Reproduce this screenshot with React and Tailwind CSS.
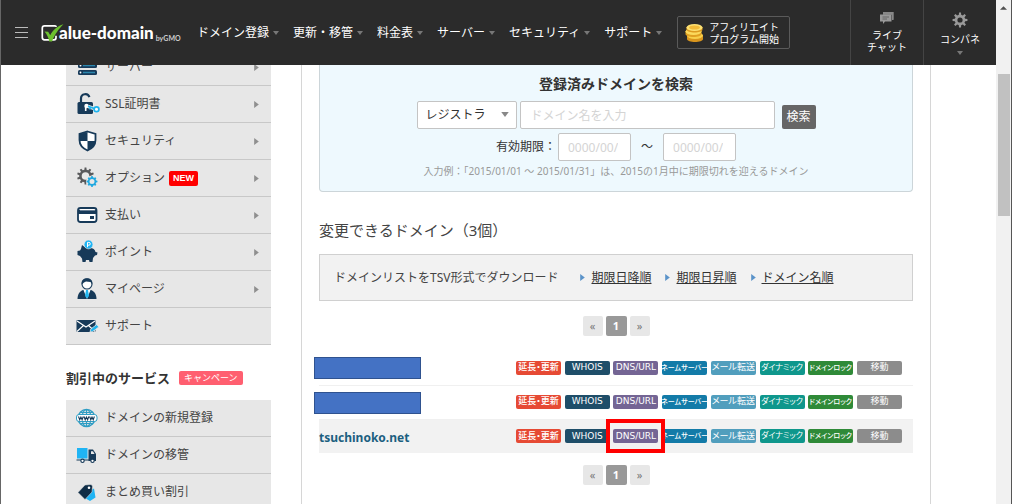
import React from "react";

const navItems = ["ドメイン登録", "更新・移管", "料金表", "サーバー", "セキュリティ", "サポート"];

function Down({ className }) {
  return (
    <svg viewBox="0 0 6 4" className={className} aria-hidden="true">
      <path d="M0 0h6L3 4z" fill="currentColor" />
    </svg>
  );
}

function Right({ className }) {
  return (
    <svg viewBox="0 0 4 6" className={className} aria-hidden="true">
      <path d="M0 0v6l4-3z" fill="currentColor" />
    </svg>
  );
}

function Svg({ children }) {
  return (
    <svg viewBox="0 0 24 24" className="h-6 w-6 shrink-0" fill="none" aria-hidden="true">
      {children}
    </svg>
  );
}

function gearPath(cx, cy, teeth, outer, inner) {
  const points = [];
  for (let i = 0; i < teeth; i++) {
    const base = (i * 2 * Math.PI) / teeth;
    const step = (2 * Math.PI) / teeth;
    [[-0.28, inner], [-0.17, outer], [0.17, outer], [0.28, inner]].forEach(([o, r]) => {
      const a = base + o * step;
      points.push(`${(cx + r * Math.sin(a)).toFixed(2)} ${(cy - r * Math.cos(a)).toFixed(2)}`);
    });
  }
  return `M${points.join("L")}Z`;
}

const ServerIcon = () => (
  <Svg>
    {[1, 8, 15].map((y) => (
      <g key={y}>
        <rect x="2" y={y} width="19" height="5" rx="1.5" fill="#173a59" />
        <path d={`M7 ${y + 2.5}h12`} stroke="#2c87ad" strokeWidth="1.5" />
        <circle cx="4.5" cy={y + 2.5} r="0.9" fill="#fff" />
      </g>
    ))}
  </Svg>
);

const LockIcon = () => (
  <Svg>
    <path d="M5 11V6.500a4.300 4.300 0 0 1 8.400-1.300" stroke="#173a59" strokeWidth="2.200" />
    <rect x="1.500" y="10" width="15.500" height="12" rx="1.500" fill="#173a59" />
    <circle cx="10.500" cy="14" r="2.200" fill="#fff" />
    <path d="M9.700 14v5" stroke="#fff" strokeWidth="1.600" />
    <path d="M12 14.300l7 2.500" stroke="#e7e7e7" strokeWidth="3.400" />
    <path d="M12 14.300l7 2.500M14 15v2.500" stroke="#1fb4ee" strokeWidth="1.700" />
    <circle cx="20.500" cy="17.200" r="2.400" stroke="#1fb4ee" strokeWidth="1.700" fill="#fff" />
  </Svg>
);

const ShieldIcon = () => (
  <Svg>
    <path d="M11.500 2.500l8 2.500v6c0 5-3.500 8.500-8 10.500-4.500-2-8-5.500-8-10.500V5z" fill="#fff" stroke="#173a59" strokeWidth="1.800" />
    <path d="M11.500 3v9h-8V5zM11.500 12h8c-.5 4.500-4 7.500-8 9.500z" fill="#173a59" />
  </Svg>
);

const GearsIcon = () => (
  <Svg>
    <path fillRule="evenodd" d={gearPath(9.5, 10, 10, 8.5, 6.3) + "M9.500 6.200a3.800 3.800 0 1 0 0 7.600 3.800 3.800 0 1 0 0-7.600Z"} fill="#58595b" />
    <circle cx="16" cy="15.500" r="6" fill="#e7e7e7" />
    <path fillRule="evenodd" d={gearPath(16, 15.5, 8, 5.5, 4.3) + "M16 13a2.500 2.500 0 1 0 0 5 2.500 2.500 0 1 0 0-5Z"} fill="#1fa8e0" />
  </Svg>
);

const CardIcon = () => (
  <Svg>
    <rect x="2" y="5" width="18.500" height="14" rx="2.500" fill="#fff" stroke="#173a59" strokeWidth="1.800" />
    <path d="M2 7h18.500v4H2z" fill="#173a59" />
    <path d="M4 7h15" stroke="#fff" strokeWidth="0.700" />
    <rect x="14" y="13" width="4" height="3" fill="#173a59" />
  </Svg>
);

const PigIcon = () => (
  <Svg>
    <path d="M5 9l1-4 4 3h4c3 0 5 1.500 5.500 4l2 .5-.5 2.500-2 .5-2 2.500-.5 4h-3l-.5-2h-3l-.5 2h-3L6 18.500 4 16l-2.500-1v-4L4 10.500z" fill="#173a59" />
    <circle cx="12.500" cy="4.500" r="4.400" fill="#1fb4f4" stroke="#e7e7e7" strokeWidth="0.600" />
    <path d="M11.500 7.200V2.400h1.400a1.300 1.300 0 0 1 0 2.800h-1.400" stroke="#fff" strokeWidth="1" />
  </Svg>
);

const PersonIcon = () => (
  <Svg>
    <circle cx="11" cy="7" r="5" fill="#fff" stroke="#173a59" strokeWidth="1.100" />
    <path d="M5.800 7.500C5 3 8 1.300 11 1.300S17 3 16.200 7.500L14.500 5l-4.500-.5-2 1z" fill="#173a59" />
    <path d="M1.500 22c0-5 2.500-8 5.500-9h8c3 1 5.500 4 5.500 9z" fill="#173a59" />
    <path d="M7.500 13h7L11 22z" fill="#fff" />
    <path d="M10 13h2l1 6-2 2.500L9 19z" fill="#1fb4ee" />
  </Svg>
);

const MailIcon = () => (
  <Svg>
    <rect x="0.500" y="6" width="19" height="12" rx="1" fill="#173a59" />
    <path d="M1 7l9 6 9-6M1 17.500l6.500-6M19 17.500l-6.500-6" stroke="#fff" strokeWidth="1.100" />
    <path d="M14 18l.8-3 6-4.500 2 2.500-6 4.500z" fill="#1fb4ee" stroke="#e7e7e7" strokeWidth="0.800" />
  </Svg>
);

const GlobeIcon = () => (
  <Svg>
    <circle cx="10.500" cy="12" r="8.500" stroke="#2f9dc4" strokeWidth="1.400" />
    <ellipse cx="10.500" cy="12" rx="4.500" ry="8.500" stroke="#2f9dc4" strokeWidth="1.200" />
    <path d="M10.500 3.500v17M4 6.500h13M4 17.500h13" stroke="#2f9dc4" strokeWidth="1.200" />
    <rect x="0.500" y="8.500" width="20.500" height="7" rx="2.500" fill="#fff" stroke="#2f9dc4" strokeWidth="1" />
    <path d="M2.500 10.500l1.200 3.200 1.200-2.700 1.200 2.700 1.200-3.200M8 10.500l1.200 3.200 1.200-2.700 1.200 2.700 1.200-3.200M13.600 10.500l1.200 3.200 1.200-2.700 1.200 2.700 1.200-3.200" stroke="#173a59" strokeWidth="1.100" />
  </Svg>
);

const TruckIcon = () => (
  <Svg>
    <rect x="1" y="5" width="10.500" height="10.500" fill="#1fb4f4" />
    <path d="M0.500 17h13" stroke="#173a59" strokeWidth="1" />
    <path d="M12.500 6.500h4.500l3 4.500v7h-7.500z" fill="#173a59" />
    <path d="M15 8.200h2l1.600 2.800H15z" fill="#e7e7e7" />
    <circle cx="6.500" cy="17.800" r="1.700" fill="#fff" stroke="#173a59" strokeWidth="1.100" />
    <circle cx="16.500" cy="17.800" r="1.700" fill="#fff" stroke="#173a59" strokeWidth="1.100" />
  </Svg>
);

const TagIcon = () => (
  <Svg>
    <path d="M12 12l6-3.500 1.500 9-5.500 3.500-5-3z" fill="#1fb4f4" />
    <path d="M2 12.500l7-7.500 6-.5 1.500 1.500-.5 6-7 7.500z" fill="#0f2d47" stroke="#e7e7e7" strokeWidth="0.500" />
    <circle cx="13" cy="7.800" r="1.300" fill="#fff" />
  </Svg>
);

const menu = [
  { label: "サーバー", Icon: ServerIcon, arrow: true },
  { label: "SSL証明書", Icon: LockIcon, arrow: true },
  { label: "セキュリティ", Icon: ShieldIcon, arrow: true },
  { label: "オプション", Icon: GearsIcon, arrow: true, isNew: true },
  { label: "支払い", Icon: CardIcon, arrow: true },
  { label: "ポイント", Icon: PigIcon, arrow: true },
  { label: "マイページ", Icon: PersonIcon, arrow: true },
  { label: "サポート", Icon: MailIcon },
];

const campaign = [
  { label: "ドメインの新規登録", Icon: GlobeIcon },
  { label: "ドメインの移管", Icon: TruckIcon },
  { label: "まとめ買い割引", Icon: TagIcon },
];

const actions = [
  { label: "延長・更新", look: "bg-[#e64a34] text-[9px] font-medium" },
  { label: "WHOIS", look: "bg-[#1f4e69] text-[9px]" },
  { label: "DNS/URL", look: "bg-[#746594] text-[9px]" },
  { label: "ネームサーバー", look: "bg-[#137ba8] text-[7px] font-medium" },
  { label: "メール転送", look: "bg-[#519ebd] text-[9px]" },
  { label: "ダイナミック", look: "bg-[#0f978c] text-[8px]" },
  { label: "ドメインロック", look: "bg-[#2f8a38] text-[7px] font-medium" },
  { label: "移動", look: "bg-[#8c8c8c] text-[9px]" },
];

function Menu({ items }) {
  return (
    <ul className="bg-[#e7e7e7]">
      {items.map(({ label, Icon, arrow, isNew }) => (
        <li key={label} className="border-b border-[#c8c8c8]">
          <a href="#" className="flex h-9 items-center pl-[10px] pr-3 text-xs text-[#444]">
            <Icon />
            <span className="ml-[5px]">{label}</span>
            {isNew && (
              <span className="ml-1 flex h-[15px] items-center rounded-xs bg-[#ff0000] px-1 font-['Liberation_Sans',sans-serif] text-[9px] font-bold text-white">
                NEW
              </span>
            )}
            {arrow && <Right className="ml-auto h-[7px] w-[5px] text-[#8f8f8f]" />}
          </a>
        </li>
      ))}
    </ul>
  );
}

function Pager({ className }) {
  return (
    <nav className={`flex justify-center gap-[3px] text-[11px] ${className}`}>
      <button className="h-5 w-5 rounded-xs bg-[#e7e7e7] leading-5 text-[#777]">«</button>
      <button className="h-5 w-[21px] rounded-xs bg-[#999] font-bold leading-5 text-white">1</button>
      <button className="h-5 w-5 rounded-xs bg-[#e7e7e7] leading-5 text-[#777]">»</button>
    </nav>
  );
}

function Logo() {
  return (
    <a href="#" className="flex items-center text-white">
      <svg viewBox="0 0 23 20" className="h-5 w-[23px]" fill="none" aria-hidden="true">
        <path d="M15 4V3.500Q15 2.800 14 2.800H3.500Q1.300 2.800 1.300 5v9.500Q1.300 16.800 3.500 16.800H13q2 0 2-2v-2" stroke="#fff" strokeWidth="1.700" />
        <path d="M3.500 8.500l3.700.2 2 3.500C12 7 16 3 22.500 1.200 17.500 6 14 11 11 18.500H8.300C7.500 14.500 6 11.500 3.500 8.500z" fill="#6cc02f" />
      </svg>
      <span className="-ml-[5px] font-['Lato',sans-serif] text-[17px] font-black leading-5">alue-domain</span>
      <span className="ml-[2px] self-end font-['Lato',sans-serif] text-[7px] font-bold leading-[10px] text-[#ccc]">byGMO</span>
    </a>
  );
}

function Header() {
  return (
    <header className="flex h-[65px] shrink-0 items-stretch bg-[#2b2b2b] text-white">
      <div className="flex items-center pl-[14px]">
        <button aria-label="メニュー" className="flex w-[13px] flex-col gap-1">
          <span className="h-px bg-[#bbb]" />
          <span className="h-px bg-[#bbb]" />
          <span className="h-px bg-[#bbb]" />
        </button>
      </div>
      <div className="flex w-[169px] items-center pl-[13px]">
        <Logo />
      </div>
      <nav className="flex items-center gap-[14px] text-xs">
        {navItems.map((item) => (
          <a key={item} href="#" className="flex items-center gap-1 whitespace-nowrap">
            {item}
            <Down className="h-1 w-[6px] text-[#777]" />
          </a>
        ))}
      </nav>
      <div className="flex items-center pl-[15px]">
        <a href="#" className="flex h-[33px] w-[113px] items-center gap-1 rounded-xs border border-[#5a5a5a] pl-[7px] text-[10px] leading-3">
          <svg viewBox="0 0 20 20" className="h-5 w-5 shrink-0" aria-hidden="true">
            <path d="M2 12v4c0 4 16 4 16 0v-4z" fill="#d9951d" />
            <ellipse cx="10" cy="12.500" rx="8" ry="3.500" fill="#f8cf4a" />
            <path d="M0.500 8v3c0 4 16 4 16 0V8z" fill="#e0a022" />
            <ellipse cx="8.500" cy="8.500" rx="8" ry="3.500" fill="#fbd95c" />
            <path d="M1.500 4v2.500c0 4 16 4 16 0V4z" fill="#dd9b20" />
            <ellipse cx="9.500" cy="4.500" rx="8" ry="3.600" fill="#fce072" />
            <ellipse cx="9.500" cy="4.500" rx="5.500" ry="2.100" fill="#f2bb38" />
          </svg>
          <span><span className="block">アフィリエイト</span><span className="block">プログラム開始</span></span>
        </a>
      </div>
      <a href="#" className="ml-auto flex w-[73px] flex-col items-center border-l border-[#444] pt-[11px] text-[10px] leading-3">
        <svg viewBox="0 0 16 14" className="mb-1 h-[14px] w-4" aria-hidden="true">
          <path d="M4 1h10.500v7.500H14V4H4z" fill="#777" />
          <path d="M4 1h10.500v8H13V3H4z" fill="#888" />
          <path d="M1 3.500h11.500v7H6L4 13v-2.500H1z" fill="#999" />
          <path d="M3.500 6h6.500M3.500 8h4.500" stroke="#666" strokeWidth="1" />
        </svg>
        <span className="block">ライブ</span>
        <span className="block">チャット</span>
      </a>
      <a href="#" className="flex w-[73px] flex-col items-center border-l border-[#444] pt-3 text-[10px] leading-3">
        <svg viewBox="0 0 16 16" className="mb-[5px] h-4 w-4" aria-hidden="true">
          <path fillRule="evenodd" d={gearPath(8, 8, 8, 7.5, 5.3) + "M8 5.400a2.600 2.600 0 1 0 0 5.200 2.600 2.600 0 1 0 0-5.200Z"} fill="#999" />
        </svg>
        <span>コンパネ</span>
        <Down className="mt-[6px] h-1 w-[6px] text-[#777]" />
      </a>
    </header>
  );
}

function SearchBox() {
  const field = "h-7 rounded-xs border border-[#c4c4c4] bg-white text-xs text-[#333] placeholder:text-[#d4d4d4]";
  return (
    <form className="rounded-b-sm border border-t-0 border-[#ccd5d9] bg-[#eef9fe] pb-3 pt-[9px] text-xs text-[#333]">
      <h2 className="text-center text-[14px] font-bold leading-5">登録済みドメインを検索</h2>
      <div className="mt-[7px] flex items-end justify-center">
        <div className="relative">
          <select aria-label="検索対象" className={`w-[100px] appearance-none pl-2 ${field}`}>
            <option>レジストラ</option>
          </select>
          <Down className="pointer-events-none absolute right-2 top-[11px] h-[5px] w-2 text-[#888]" />
        </div>
        <input aria-label="ドメイン名" placeholder="ドメイン名を入力" className={`ml-[3px] w-[255px] px-[10px] ${field}`} />
        <button type="button" className="ml-[7px] h-6 w-[34px] rounded-xs bg-[#666] text-xs text-white">検索</button>
      </div>
      <div className="mt-1 flex items-center justify-center">
        <label htmlFor="from">有効期限：</label>
        <input id="from" placeholder="0000/00/00" className={`ml-[2px] w-[73px] pl-[9px] pr-3 ${field}`} />
        <span className="mx-[10px]">～</span>
        <input id="to" aria-label="有効期限の終わり" placeholder="0000/00/00" className={`w-[73px] pl-[9px] pr-3 ${field}`} />
      </div>
      <p className="mt-[2px] text-center text-[10px] leading-4 text-[#999]">
        入力例：「2015/01/01 ～ 2015/01/31」は、2015の1月中に期限切れを迎えるドメイン
      </p>
    </form>
  );
}

function DomainRow({ name, marked }) {
  return (
    <tr className={marked ? "bg-[#f2f2f2]" : "border-b border-[#f0f0f0]"}>
      <td className="relative h-[34px] p-0 align-middle">
        {name ? (
          <a href="#" className="text-xs font-bold text-[#1c5f80]">{name}</a>
        ) : (
          <span className="absolute -left-[5px] top-[6px] h-[22px] w-[107px] border border-[#2f528f] bg-[#4472c4]" />
        )}
      </td>
      <td className="h-[34px] w-[397px] p-0 align-middle">
        <div className="flex w-[386px] justify-between font-['DejaVu_Sans','Noto_Sans_CJK_JP',sans-serif]">
          {actions.map(({ label, look }) => (
            <div key={label} className="relative h-[14px]">
              <button className={`flex h-[14px] w-[45px] items-center justify-center whitespace-nowrap rounded-xs text-white [font-feature-settings:'palt'] ${look}`}>
                {label}
              </button>
              {marked && label === "DNS/URL" && (
                <span className="pointer-events-none absolute -inset-x-[7px] -inset-y-[10px] z-10 border-4 border-[#ff0000]" />
              )}
            </div>
          ))}
        </div>
      </td>
    </tr>
  );
}

export default function App() {
  return (
    <div className="flex h-screen overflow-hidden border-l border-r border-l-[#666] border-r-[#555] bg-white font-['Noto_Sans','Noto_Sans_CJK_JP',sans-serif]" lang="ja">
      <div className="flex min-w-0 flex-1 flex-col">
        <Header />
        <div className="min-h-0 flex-1 overflow-hidden">
          <div className="mx-auto flex h-full max-w-[865px] gap-[30px]">
            <aside className="-mt-4 w-[205px] shrink-0">
              <Menu items={menu} />
              <div className="mb-3 mt-[23px] flex items-center gap-[9px]">
                <h2 className="text-[13px] font-bold leading-5 text-[#333]">割引中のサービス</h2>
                <span className="flex h-[14px] items-center rounded-xs bg-[#ff5f70] px-[5px] text-[9px] text-white">キャンペーン</span>
              </div>
              <Menu items={campaign} />
            </aside>
            <main className="min-w-0 flex-1 border-x border-[#d6d6d6] px-[17px]">
              <SearchBox />
              <h1 className="mb-3 mt-[26px] text-[15px] leading-6 text-[#444]">変更できるドメイン（3個）</h1>
              <div className="flex h-[47px] items-center border border-[#d0d0d0] bg-[#f2f2f2] pl-[14px] text-xs text-[#444]">
                <span className="mr-2">ドメインリストをTSV形式でダウンロード</span>
                {["期限日降順", "期限日昇順", "ドメイン名順"].map((label) => (
                  <span key={label} className="ml-[14px] flex items-center gap-[6px]">
                    <Right className="h-[7px] w-[5px] text-[#5b93c9]" />
                    <a href="#" className="text-[#333] underline">{label}</a>
                  </span>
                ))}
              </div>
              <Pager className="my-[15px]" />
              <table className="w-full border-collapse">
                <tbody>
                  <DomainRow />
                  <DomainRow />
                  <DomainRow name="tsuchinoko.net" marked />
                </tbody>
              </table>
              <Pager className="mt-3" />
            </main>
          </div>
        </div>
      </div>
      <div className="flex w-[15px] shrink-0 flex-col items-center bg-[#f1f1f1]">
        <svg viewBox="0 0 8 4" className="mt-[6px] h-1 w-[7px]" aria-hidden="true">
          <path d="M0 4h8L4 0z" fill="#505050" />
        </svg>
        <div className="mt-16 h-[142px] w-3 bg-[#c1c1c1]" />
      </div>
    </div>
  );
}
